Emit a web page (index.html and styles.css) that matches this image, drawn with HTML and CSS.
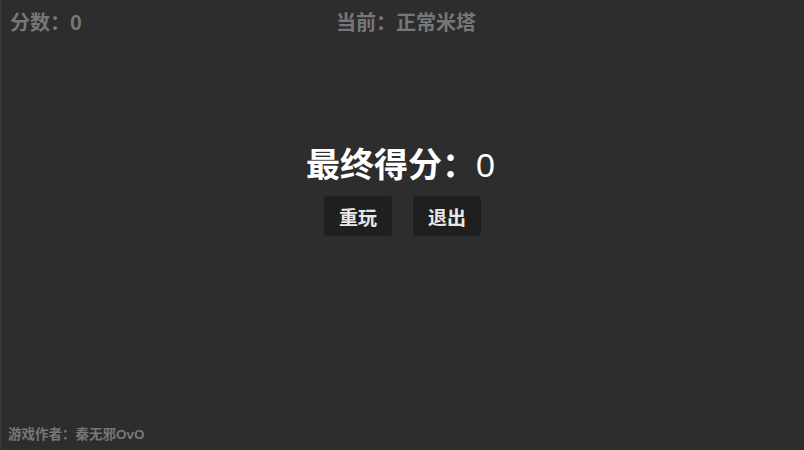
FILE: index.html
```html
<!DOCTYPE html>
<html lang="zh">
<head>
<meta charset="utf-8">
<title>米塔</title>
<link rel="stylesheet" href="styles.css">
</head>
<body>
<div class="app">
  <header class="topbar">
    <div class="score">分数：0</div>
    <div class="mode">当前：正常米塔</div>
    <div></div>
  </header>
  <main class="over">
    <h1 class="final">最终得分：<span class="num">0</span></h1>
    <div class="actions">
      <button class="btn">重玩</button>
      <button class="btn">退出</button>
    </div>
  </main>
  <footer class="author">游戏作者：秦无邪<span class="latin">OvO</span></footer>
</div>
</body>
</html>
```
FILE: styles.css
```css
html, body {
  margin: 0;
  padding: 0;
  height: 100%;
}
body {
  background: #2d2d2d;
  font-family: "Noto Sans CJK SC", "Noto Sans", sans-serif;
}
.app {
  height: 100%;
  box-sizing: border-box;
  border-left: 1px solid #3a3a3a;
  display: flex;
  flex-direction: column;
}
.topbar {
  display: grid;
  grid-template-columns: 1fr auto 1fr;
  padding: 12px 10px 0 9px;
  font-size: 20px;
  line-height: 20px;
  font-weight: bold;
  color: #777;
}
.num {
  font-family: "Liberation Sans", sans-serif;
  font-weight: normal;
  line-height: 0;
}
.mode {
  padding-left: 8px;
}
.over {
  display: flex;
  flex-direction: column;
  align-items: center;
  padding-top: 114px;
}
.final {
  margin: 0;
  font-size: 34px;
  line-height: 34px;
  font-weight: bold;
  color: #fff;
  padding-right: 4px;
}
.actions {
  display: flex;
  gap: 21px;
  margin-top: 16px;
}
.btn {
  width: 68px;
  height: 40px;
  border: none;
  border-radius: 4px;
  background: #1f1f1f;
  color: #e8e8e8;
  font-family: inherit;
  font-size: 19px;
  font-weight: bold;
  padding: 0;
}
.author {
  margin-top: auto;
  padding: 0 0 10px 7px;
  font-size: 13.5px;
  line-height: 13px;
  font-weight: bold;
  color: #777;
}
.latin {
  font-family: "Liberation Sans", sans-serif;
  font-weight: bold;
  font-size: 13.5px;
  line-height: 0;
}
```
